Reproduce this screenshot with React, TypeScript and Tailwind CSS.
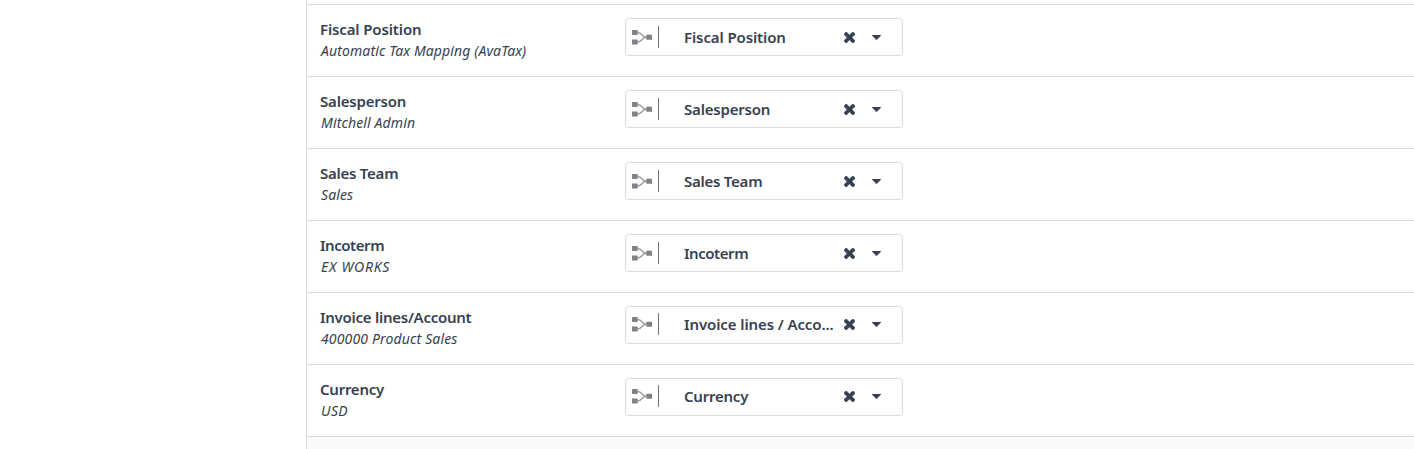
import React from "react";

type Row = {
  label: string;
  labelClass: string;
  preview: string;
  previewClass: string;
  field: string;
  fieldClass: string;
  padClass: string;
};

const ROWS: Row[] = [
  {
    label: "Fiscal Position",
    labelClass: "tracking-[-0.13px]",
    preview: "Automatic Tax Mapping (AvaTax)",
    previewClass: "tracking-[0.12px]",
    field: "Fiscal Position",
    fieldClass: "tracking-[-0.11px]",
    padClass: "",
  },
  {
    label: "Salesperson",
    labelClass: "tracking-[-0.2px]",
    preview: "Mitchell Admin",
    previewClass: "tracking-[0.14px]",
    field: "Salesperson",
    fieldClass: "tracking-[-0.2px]",
    padClass: "",
  },
  {
    label: "Sales Team",
    labelClass: "tracking-[-0.25px]",
    preview: "Sales",
    previewClass: "tracking-[0.1px]",
    field: "Sales Team",
    fieldClass: "tracking-[-0.25px]",
    padClass: "",
  },
  {
    label: "Incoterm",
    labelClass: "tracking-[-0.45px]",
    preview: "EX WORKS",
    previewClass: "tracking-[0.75px]",
    field: "Incoterm",
    fieldClass: "tracking-[-0.45px]",
    padClass: "",
  },
  {
    label: "Invoice lines/Account",
    labelClass: "tracking-[-0.26px]",
    preview: "400000 Product Sales",
    previewClass: "tracking-[0.15px]",
    field: "Invoice lines / Acco...",
    fieldClass: "tracking-[-0.1px]",
    padClass: "pb-[2px]",
  },
  {
    label: "Currency",
    labelClass: "tracking-[-0.25px]",
    preview: "USD",
    previewClass: "tracking-[0.4px]",
    field: "Currency",
    fieldClass: "tracking-[-0.23px]",
    padClass: "pb-[2px]",
  },
];

const RelationIcon = () => (
  <svg className="h-[15px] w-[21px] shrink-0" viewBox="0 0 21 15" fill="none">
    <path d="M5.500 2.500C11 2.500 9 7.200 14.500 7.200M5.500 12C11 12 9 7.200 14.500 7.200" stroke="#97999d" strokeWidth="1.500" />
    <path d="M0 0h5.700v5H0zM0 9.500h5.700v5H0zM14.300 4.700H20v5h-5.700z" fill="#808287" />
  </svg>
);

const RemoveIcon = () => (
  <svg className="h-[11px] w-[11px]" viewBox="302 366 1188 1188" fill="currentColor">
    <path
      d="M1490 1322q0 40-28 68l-136 136q-28 28-68 28t-68-28l-294-294-294 294q-28 28-68 28t-68-28l-136-136q-28-28-28-68t28-68l294-294-294-294q-28-28-28-68t28-68l136-136q28-28 68-28t68 28l294 294 294-294q28-28 68-28t68 28l136 136q28 28 28 68t-28 68l-294 294 294 294q28 28 28 68z"
      stroke="currentColor"
      strokeWidth="40"
    />
  </svg>
);

const CaretIcon = () => (
  <svg className="h-[5px] w-[9px]" viewBox="0 0 9 5" fill="currentColor">
    <path d="M0.500 0h8q.8 0 .3.700L5.100 4.600q-.6.500-1.200 0L.2.700Q-.3 0 .5 0z" />
  </svg>
);

function FieldSelect({ value, className, padClass }: { value: string; className: string; padClass: string }) {
  return (
    <div className={`flex h-[38px] w-[278px] items-center rounded-[4px] border border-[#d8dadd] bg-white pl-[6px] ${padClass}`}>
      <RelationIcon />
      <div className="ml-[5px] h-[22px] w-px bg-[#6f7178]" />
      <div className="ml-[25px] w-[151px] whitespace-nowrap text-[15px] font-semibold leading-[22px]">
        <span className={className}>{value}</span>
      </div>
      <div className="ml-[9px] pt-px">
        <RemoveIcon />
      </div>
      <div className="ml-[17px]">
        <CaretIcon />
      </div>
    </div>
  );
}

export default function App() {
  return (
    <div className="flex h-[449px] w-[1414px] overflow-hidden bg-white font-['Noto_Sans',sans-serif] text-[#374151]">
      <div className="w-[306px] shrink-0" />
      <div className="flex flex-1 flex-col border-l border-[#d8dadd] bg-[#f9fafb]">
        <div className="h-[5px] border-b border-[#d8dadd] bg-white" />
        {ROWS.map((row) => (
          <div key={row.label} className="flex h-[72px] shrink-0 border-b border-[#d8dadd] bg-white pl-[13px] pt-[13px]">
            <div className="-mt-px w-[305px] shrink-0 whitespace-nowrap">
              <div className="text-[15px] font-semibold leading-[24px]">
                <span className={row.labelClass}>{row.label}</span>
              </div>
              <div className="pl-px text-[14px] italic leading-[19px]">
                <span className={row.previewClass}>{row.preview}</span>
              </div>
            </div>
            <FieldSelect value={row.field} className={row.fieldClass} padClass={row.padClass} />
          </div>
        ))}
      </div>
    </div>
  );
}
